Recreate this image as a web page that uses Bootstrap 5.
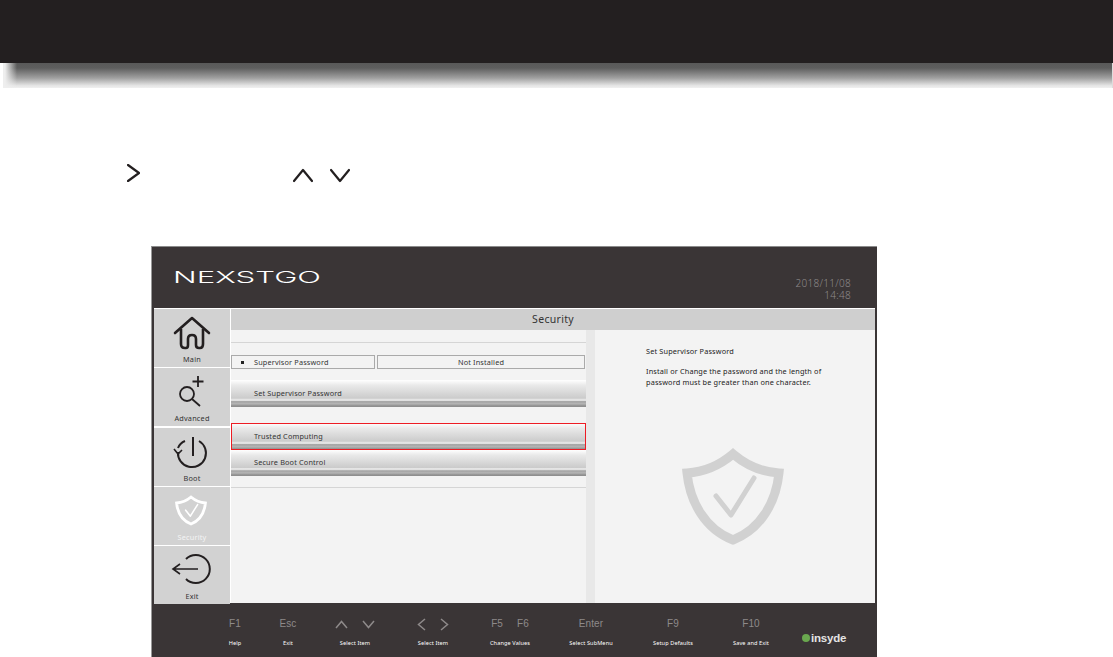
<!doctype html>
<html lang="en"><head><meta charset="utf-8"><title>BIOS Security</title>
<link href="https://cdn.jsdelivr.net/npm/bootstrap@5.3.0/dist/css/bootstrap.min.css" rel="stylesheet">
<style>
html,body{margin:0;background:#fff;height:657px;overflow:hidden;font-family:"Noto Sans","Liberation Sans",sans-serif}
.top-black{height:63px;background:#231f20}
.top-shade{height:25px;margin-left:3px;border-right:1px solid #ddd;background:linear-gradient(90deg,#eee 0,#eee 2px,rgba(238,238,238,0) 14px),linear-gradient(180deg,#595959 0,#5e5e5e 20%,#a0a0a0 60%,#e4e4e4 90%,#f0f0f0 100%)}
.hint-row{height:158px;padding:76px 0 0 127px;align-items:flex-start}
.hint-row svg{display:block}
.bios{width:726px;height:411px;margin-left:151px;background:#3a3536;border-top:1px solid #8b8b8b;border-left:1px solid #999;padding:0 2px 0 2px;color:#333}
.bios-head{height:61px;position:relative;border-bottom:0}
.brand{display:block;position:absolute;left:18px;top:18px}
.brand text{font-family:"Inter",sans-serif;font-weight:300;font-size:16.5px;fill:#fff}
.clock{position:absolute;right:24px;top:30px;text-align:right;font-size:10px;line-height:12px;color:#8e8a8a;letter-spacing:.3px;font-family:"Noto Sans",sans-serif;font-weight:300}
.bios-mid{height:295px;border-top:1px solid #fff;background:#fff}
.side{width:76px;flex:none;border-right:0}
.side-item{height:58px;background:#d2d2d2;margin-bottom:1.25px;border-bottom:0;text-align:center;font-size:7.3px;line-height:10px;letter-spacing:.2px}
.side-item+.side-item{border-top:0}
.side-gap{height:1.5px;background:#fff}
.side-item svg{display:block;height:45px;width:76px}
.side-item.sel{color:#f4f4f4}
.main-pane{width:644px;margin-left:1px;flex:none;background:#f3f3f3}
.title-strip{height:21px;background:#cfcfcf;text-align:center;font-size:10.5px;line-height:21px;letter-spacing:.3px;padding-right:0}
.cols{height:273px}
.col-left{width:355px;flex:none}
.col-track{width:9px;flex:none;background:#e8e8e8}
.col-right{width:280px;flex:none;padding:16px 0 0 51px;font-size:7.3px;line-height:11px;color:#222;letter-spacing:.16px}
.col-right p{margin:0 0 9px}
.shield-big{display:block;margin:60px 0 0 36px}
.rule-a{height:13px;border-bottom:1px solid #d5d5d5}
.sup-row{margin-top:12px;gap:2px;height:14px;padding-right:1px;font-size:7.3px;letter-spacing:.16px}
.sup-box{border:1px solid #aaa;line-height:12px;height:14px;color:#333}
.sup-a{width:144px;padding-left:9px}
.sup-b{width:208px;text-align:center}
.sq{display:inline-block;width:3px;height:3px;background:#222;margin-right:10px;vertical-align:1px}
.menu-line{height:27px;padding-left:23px;font-size:7.3px;letter-spacing:.16px;line-height:27px;color:#333;background:linear-gradient(180deg,#fff 0,#e9e9e9 20%,#cbcbcb 68%,#e6e6e6 70%,#e0e0e0 76%,#a2a2a2 80%,#b5b5b5 88%,#8f8f8f 96%,#8f8f8f 100%)}
.m1{margin-top:11px}
.m2{margin-top:16px;outline:1px solid #ed1c24;outline-offset:-1px;height:27px;line-height:27px}
.m3{height:26px;line-height:24px}
.rule-b{height:12px;border-bottom:1px solid #d5d5d5}
.bios-foot{height:54px;padding-top:1px}
.key{flex:none;text-align:center;color:#fff;font-size:5.6px;line-height:8px;letter-spacing:.1px;width:60px}
.key b{display:flex;justify-content:center;gap:14px;align-items:center;height:14px;margin:13px 0 8px;font-weight:300;font-size:10px;line-height:14px;color:#8e8a8a;font-family:"Liberation Sans",sans-serif}
.key svg{display:block}
.k1{margin-left:51px}
.k2{margin-left:-7px}
.k3{margin-left:7px}
.k4{margin-left:18px}
.k5{margin-left:17px}
.k6{margin-left:21px}
.k7{margin-left:22px}
.k8{margin-left:18px}
.ins{flex:none;margin-left:21px;margin-top:14px;display:flex;align-items:center;color:#e4e4e4;font-family:"Liberation Sans",sans-serif;font-weight:700;font-size:11.5px;letter-spacing:-.2px;line-height:14px}
.ins svg{margin-right:1px}
</style></head><body>
<svg width="0" height="0" class="d-block position-absolute"><defs>
<symbol id="shield" viewBox="24 12 102 98"><path d="M75 18C88 29 103 36 121 37C118 66 103 93 75 104C47 93 32 66 29 37C47 36 62 29 75 18Z" fill="none" stroke="currentColor" stroke-width="9" stroke-linejoin="miter"/><path d="M58 60L73 79L96 42" fill="none" stroke="currentColor" stroke-width="5" stroke-linecap="round" stroke-linejoin="round"/></symbol>
</defs></svg>
<div class="top-black"></div>
<div class="top-shade"></div>
<div class="hint-row d-flex">
<svg width="13" height="18" viewBox="0 0 13 18"><path d="M1 1L12 9L1 17" fill="none" stroke="#231f20" stroke-width="2.2" stroke-linecap="round" stroke-linejoin="round"/></svg>
<svg class="ms-up" width="20" height="15" viewBox="0 0 20 15" style="margin:4px 0 0 153px"><path d="M1 13L10 2L19 13" fill="none" stroke="#231f20" stroke-width="2.2" stroke-linecap="round" stroke-linejoin="round"/></svg>
<svg width="20" height="15" viewBox="0 0 20 15" style="margin:4px 0 0 17px"><path d="M1 2L10 13L19 2" fill="none" stroke="#231f20" stroke-width="2.2" stroke-linecap="round" stroke-linejoin="round"/></svg>
</div>
<div class="bios">
 <div class="bios-head">
  <svg class="brand" width="155" height="24" viewBox="0 0 155 24"><text x="1" y="18" textLength="148" lengthAdjust="spacingAndGlyphs">NEXSTGO</text></svg>
  <div class="clock">2018/11/08<br>14:48</div>
 </div>
 <div class="bios-mid d-flex">
  <div class="side">
   <div class="side-item"><svg viewBox="0 0 76 45"><path d="M21 24L38 9L55 24" fill="none" stroke="#231f20" stroke-width="2.6" stroke-linecap="round" stroke-linejoin="round"/><path d="M27 20V35Q27 39 31 39H32Q34 39 34 36V30Q34 26 38 26Q42 26 42 30V36Q42 39 45 39H46Q49 39 49 35V20" fill="none" stroke="#231f20" stroke-width="2.6"/></svg>Main</div>
   <div class="side-item"><svg viewBox="0 0 76 45"><circle cx="33" cy="26" r="7" fill="none" stroke="#231f20" stroke-width="1.8"/><path d="M38 31L46 38M44 8V19M38.5 13.500H49.500" fill="none" stroke="#231f20" stroke-width="1.8"/></svg>Advanced</div>
   <div class="side-item"><svg viewBox="0 0 76 45"><path d="M39 9V28" stroke="#231f20" stroke-width="2" fill="none"/><path d="M45 13A14 14 0 1 1 24 24" stroke="#231f20" stroke-width="2" fill="none"/><path d="M31 13Q26 15 24 20" stroke="#231f20" stroke-width="2" fill="none"/><path d="M20 21L24 26L28 22" stroke="#231f20" stroke-width="1.600" fill="none"/></svg>Boot</div>
   <div class="side-item sel"><svg viewBox="0 0 76 45" class="text-white"><use href="#shield" x="21" y="8" width="32" height="31"/></svg>Security</div>
   <div class="side-item"><svg viewBox="0 0 76 45"><path d="M32 13A14 14 0 1 1 32 33" stroke="#231f20" stroke-width="2" fill="none"/><path d="M19 23H44M26 18L19 23L26 28" stroke="#231f20" stroke-width="1.600" fill="none"/></svg>Exit</div>
  </div>
  <div class="main-pane">
   <div class="title-strip">Security</div>
   <div class="cols d-flex">
    <div class="col-left">
     <div class="rule-a"></div>
     <div class="sup-row d-flex"><div class="sup-box sup-a"><span class="sq"></span>Supervisor Password</div><div class="sup-box sup-b">Not Installed</div></div>
     <div class="menu-line m1">Set Supervisor Password</div>
     <div class="menu-line m2">Trusted Computing</div>
     <div class="menu-line m3">Secure Boot Control</div>
     <div class="rule-b"></div>
    </div>
    <div class="col-track"></div>
    <div class="col-right">
     <p>Set Supervisor Password</p>
     <p>Install or Change the password and the length of<br>password must be greater than one character.</p>
     <svg class="shield-big" width="102" height="98" style="color:#d1d1d1"><use href="#shield"/></svg>
    </div>
   </div>
  </div>
 </div>
 <div class="bios-foot d-flex">
  <div class="key k1"><b>F1</b>Help</div>
  <div class="key k2"><b>Esc</b>Exit</div>
  <div class="key k3"><b><svg width="13" height="9" viewBox="0 0 13 9"><path d="M1 8L6.500 1.500L12 8" fill="none" stroke="#8e8a8a" stroke-width="1.500"/></svg><svg width="13" height="9" viewBox="0 0 13 9"><path d="M1 1L6.500 7.500L12 1" fill="none" stroke="#8e8a8a" stroke-width="1.500"/></svg></b>Select Item</div>
  <div class="key k4"><b><svg width="9" height="13" viewBox="0 0 9 13"><path d="M8 1L1.500 6.500L8 12" fill="none" stroke="#8e8a8a" stroke-width="1.500"/></svg><svg width="9" height="13" viewBox="0 0 9 13"><path d="M1 1L7.500 6.500L1 12" fill="none" stroke="#8e8a8a" stroke-width="1.500"/></svg></b>Select Item</div>
  <div class="key k5"><b>F5<span>F6</span></b>Change Values</div>
  <div class="key k6"><b>Enter</b>Select SubMenu</div>
  <div class="key k7"><b>F9</b>Setup Defaults</div>
  <div class="key k8"><b>F10</b>Save and Exit</div>
  <div class="ins"><svg width="8" height="8" viewBox="0 0 8 8"><circle cx="4" cy="4" r="4" fill="#6aa84f"/></svg>insyde</div>
 </div>
</div>
</body></html>
